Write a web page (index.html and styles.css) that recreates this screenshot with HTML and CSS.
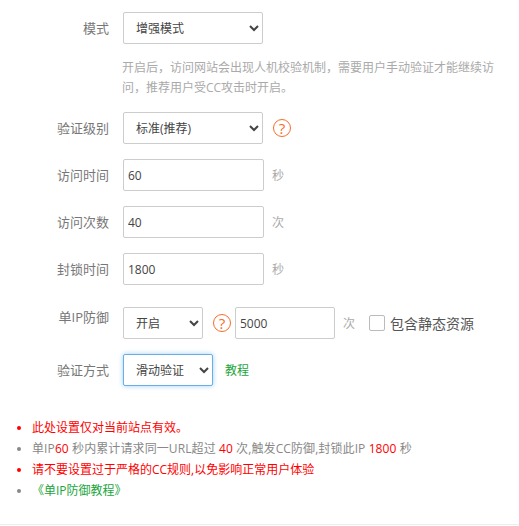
FILE: index.html
```html
<!DOCTYPE html>
<html lang="zh-CN">
<head>
  <meta charset="UTF-8">
  <meta name="viewport" content="width=device-width, initial-scale=1.0">
  <title>CC防御</title>
  <link rel="stylesheet" href="styles.css">
</head>
<body>
  <div class="container">
    <div class="form-row form-row-mode">
      <label class="form-label">模式</label>
      <select class="field select-wide">
        <option>增强模式</option>
      </select>
    </div>
    <p class="help-text">开启后，访问网站会出现人机校验机制，需要用户手动验证才能继续访问，推荐用户受CC攻击时开启。</p>

    <div class="form-row form-row-level">
      <label class="form-label">验证级别</label>
      <select class="field select-wide">
        <option>标准(推荐)</option>
      </select>
      <span class="help-icon help-icon-level">?</span>
    </div>

    <div class="form-row">
      <label class="form-label">访问时间</label>
      <input class="field input-wide" type="text" value="60">
      <span class="unit">秒</span>
    </div>

    <div class="form-row">
      <label class="form-label">访问次数</label>
      <input class="field input-wide" type="text" value="40">
      <span class="unit">次</span>
    </div>

    <div class="form-row form-row-lock">
      <label class="form-label">封锁时间</label>
      <input class="field input-wide" type="text" value="1800">
      <span class="unit">秒</span>
    </div>

    <div class="form-row">
      <label class="form-label label-raised">单IP防御</label>
      <select class="field select-small">
        <option>开启</option>
      </select>
      <span class="help-icon help-icon-ip">?</span>
      <input class="field input-ip" type="text" value="5000">
      <span class="unit">次</span>
      <span class="checkbox"></span>
      <span class="checkbox-text">包含静态资源</span>
    </div>

    <div class="form-row">
      <label class="form-label">验证方式</label>
      <select class="field select-medium">
        <option>滑动验证</option>
      </select>
      <a href="#" class="tutorial-link">教程</a>
    </div>

    <ul class="notes">
      <li class="note-red">此处设置仅对当前站点有效。</li>
      <li class="note-counts">单IP<b>60</b> 秒内累计请求同一URL超过 <b>40</b> 次,触发CC防御,封锁此IP <b>1800</b> 秒</li>
      <li class="note-red">请不要设置过于严格的CC规则,以免影响正常用户体验</li>
      <li><a href="#" class="note-link">《单IP防御教程》</a></li>
    </ul>
  </div>
</body>
</html>
```

FILE: styles.css
```css
body {
  font-family: "Open Sans", "Noto Sans CJK SC", sans-serif;
  font-size: 12px;
  color: #666;
  background-color: #fff;
  margin: 0;
}

.container {
  height: 525px;
  padding-top: 12px;
  box-sizing: border-box;
  border-bottom: 1px solid #eee;
}

.form-row {
  display: flex;
  align-items: center;
  height: 32px;
  margin-bottom: 15px;
}

.form-row-mode {
  margin-bottom: 0;
}

.form-row-lock {
  margin-bottom: 22px;
}

.form-label {
  width: 109px;
  margin-right: 14px;
  padding-bottom: 2px;
  text-align: right;
  font-size: 13px;
  color: #777;
  flex-shrink: 0;
}

.label-raised {
  padding-bottom: 14px;
}

.field {
  height: 32px;
  box-sizing: border-box;
  border: 1px solid #ccc;
  border-radius: 2px;
  background-color: #fff;
  color: #444;
  font-family: inherit;
  font-size: 12px;
  outline: none;
}

select.field {
  padding-left: 8px;
}

input.field {
  padding: 0 4px;
}

.select-wide {
  width: 140px;
}

.select-small {
  width: 80px;
}

.select-medium {
  width: 90px;
  border-color: #66afe9;
  box-shadow: 0 0 5px rgba(102, 175, 233, 0.6);
}

.input-wide {
  width: 141px;
}

.input-ip {
  width: 100px;
}

.help-text {
  width: 380px;
  margin: 14px 0 14px 122px;
  line-height: 20px;
  color: #aaa;
}

.help-icon {
  width: 18px;
  height: 18px;
  box-sizing: border-box;
  border: 1px solid #f96c2a;
  border-radius: 50%;
  color: #f96c2a;
  font-size: 15px;
  line-height: 16px;
  text-align: center;
}

.help-icon-level {
  margin-left: 10px;
}

.help-icon-ip {
  margin: 0 4px 0 10px;
}

.unit {
  margin-left: 8px;
  color: #aaa;
}

.checkbox {
  width: 16px;
  height: 16px;
  box-sizing: border-box;
  margin-left: 14px;
  border: 1px solid #bbb;
  border-radius: 2px;
}

.checkbox-text {
  margin-left: 5px;
  font-size: 14px;
  color: #555;
}

.tutorial-link {
  margin-left: 12px;
  color: #20a53a;
  text-decoration: none;
}

.notes {
  margin: 31px 0 0;
  padding-left: 32px;
  color: #888;
}

.notes li {
  height: 21px;
  line-height: 21px;
}

.notes b {
  font-weight: normal;
  color: #f00;
}

.note-red {
  color: #f00;
}

.note-counts {
  letter-spacing: 0.1px;
}

.note-link {
  color: #20a53a;
  text-decoration: none;
}
```
